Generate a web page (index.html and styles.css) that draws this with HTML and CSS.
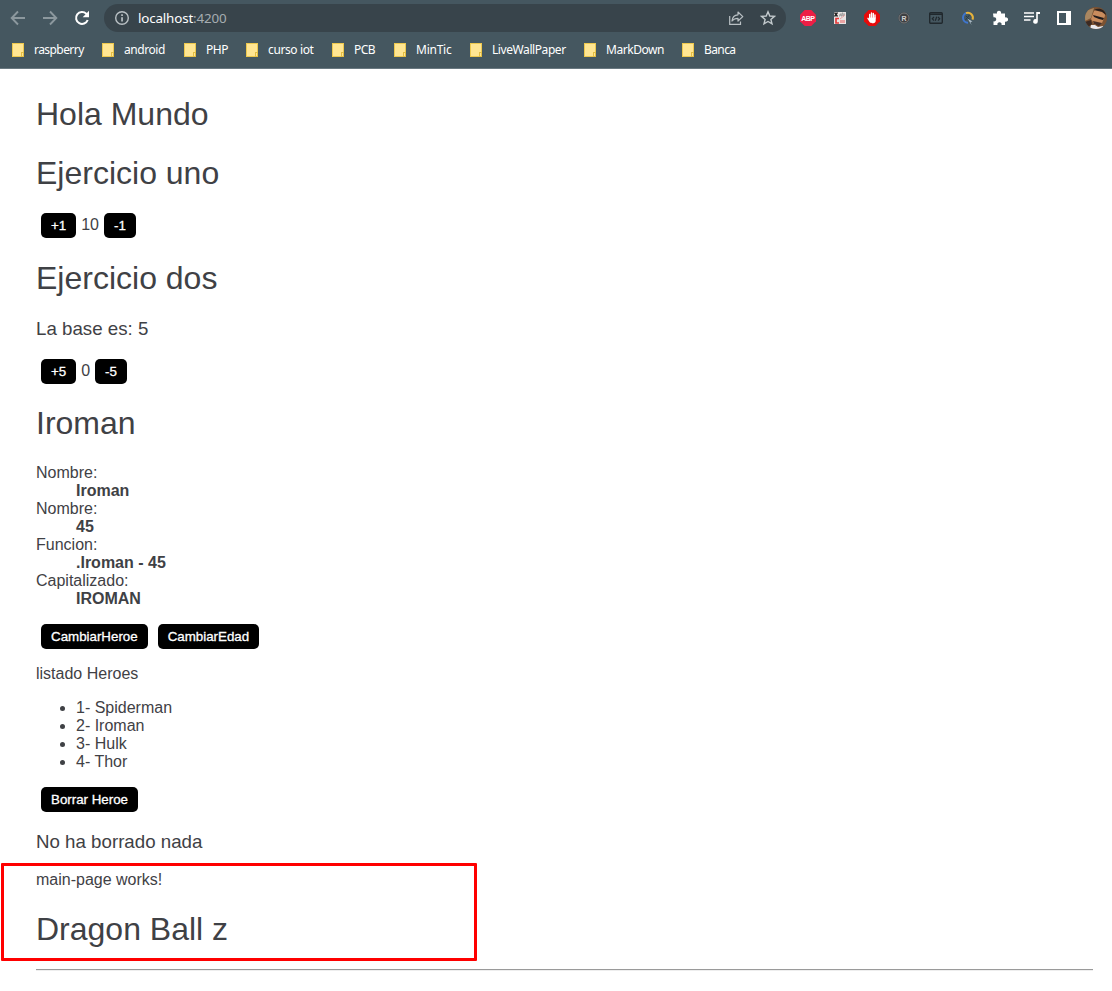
FILE: index.html
```html
<!DOCTYPE html>
<html lang="es">
<head>
<meta charset="utf-8">
<title>localhost:4200</title>
<link rel="stylesheet" href="styles.css">
</head>
<body>
<header class="browser">
  <div class="toolbar">
    <svg class="nav" viewBox="0 0 16 16"><path d="M15 8H2M8 1.5 1.7 8 8 14.500" fill="none" stroke="#8c989e" stroke-width="1.9"/></svg>
    <svg class="nav" viewBox="0 0 16 16"><path d="M1 8h13M8 1.500 14.300 8 8 14.500" fill="none" stroke="#8c989e" stroke-width="1.9"/></svg>
    <svg class="nav" viewBox="0 0 16 16"><path d="M13.700 10A6 6 0 1 1 12.300 3.700L14 5.400" fill="none" stroke="#fff" stroke-width="2"/><path d="M15 .8v6.400H8.700z" fill="#fff"/></svg>
    <div class="address">
      <svg class="info" viewBox="0 0 16 16"><circle cx="8" cy="8" r="6.300" fill="none" stroke="#b9c0c4" stroke-width="1.400"/><path d="M7.200 7.200h1.700v4.200H7.200zM7.200 4.300h1.700v1.700H7.200z" fill="#b9c0c4"/></svg>
      <span class="url">localhost<span class="port">:4200</span></span>
      <svg class="share" viewBox="0 0 16 16"><path d="M1.700 6v8.300h10.800V11.500" fill="none" stroke="#b9c0c4" stroke-width="1.200"/><path d="M4 11c.4-4 2.500-6 6-6.200V2l4.800 4.600L10 11V8.300C7.500 8.300 5.500 9 4 11z" fill="none" stroke="#b9c0c4" stroke-width="1.200" stroke-linejoin="round"/></svg>
      <svg class="star" viewBox="0 0 16 16"><path d="M8 1.800 9.800 6l4.600.4-3.500 3 1.100 4.500L8 11.500l-4 2.400 1.100-4.500-3.500-3L6.200 6z" fill="none" stroke="#c3cacd" stroke-width="1.400"/></svg>
    </div>
    <div class="extensions">
      <svg viewBox="0 0 16 16"><path d="M4.700 0h6.600L16 4.700v6.600L11.300 16H4.700L0 11.300V4.700z" fill="#ed1e45"/><text x="1.200" y="10.800" class="abp" textLength="13.600">ABP</text></svg>
      <svg viewBox="0 0 16 16"><path d="M2 2h12v12H2z" fill="#e8e4e4"/><path d="m2.500 2.500 3 4m0-4-3 4" stroke="#222" stroke-width="1.300"/><path d="M7 6h1V4h1v2h1V3h1v3h1V4h1" fill="none" stroke="#888" stroke-width=".7"/><path d="M7 8.500H4v4.500h3" fill="none" stroke="#e33b3b" stroke-width="1.700"/><path d="M8 10h5v3H8z" fill="#e9a2a2"/><path d="m8 9 5-4" stroke="#e9a2a2"/></svg>
      <svg viewBox="0 0 16 16"><path d="M4.700 0h6.600L16 4.700v6.600L11.300 16H4.700L0 11.300V4.700z" fill="#e60b0b"/><path d="M5.700 8V4.500M7.500 7.500V3M9.300 7.500v-4M11 8V5M6.500 12 4 8.300" stroke="#fff" stroke-width="1.400" stroke-linecap="round"/><path d="M5 7.500h6.700V11c0 1-1 2.300-2.500 2.300S6.500 13 5 10z" fill="#fff"/></svg>
      <svg viewBox="0 0 16 16"><circle cx="8" cy="8" r="5.700" fill="#3d3f41"/><circle cx="8" cy="8" r="5" fill="none" stroke="#77797b"/><text x="5.500" y="10.800" class="badge">R</text></svg>
      <svg viewBox="0 0 16 16"><rect x="1.700" y="2.700" width="12.600" height="10.600" rx="1" fill="none" stroke="#20282d" stroke-width="1.400"/><path d="M2 4.300h12" stroke="#20282d" stroke-width="1.400"/><path d="M6 7 4.300 8.800 6 10.500M10 7l1.700 1.800L10 10.500M8.700 6.700l-1.400 4" fill="none" stroke="#20282d" stroke-width="1.200"/></svg>
      <svg viewBox="0 0 16 16"><path d="M8 2.700A5 5 0 0 0 8 12.700" fill="none" stroke="#3e76cf" stroke-width="2"/><path d="M6 3.100a5 5 0 0 1 6.500 6.500" fill="none" stroke="#e7b33b" stroke-width="2"/><path d="m5.500 10 4-5M6 6l4 4" stroke="#263c4a"/><path d="m7.500 8.500 5 3-2 .5 1 3z" fill="#aebdc8"/></svg>
      <svg viewBox="0 0 16 16"><path d="M1 3.500h4A2.100 2.100 0 1 1 9 3.500h4v4a2.200 2.200 0 1 1 0 4V15H9.500a2.100 2.100 0 1 0-4 0H1.500v-3.700a2.100 2.100 0 1 0 0-4z" fill="#fff"/></svg>
      <svg viewBox="0 0 16 16"><path d="M0 3h10M0 6.500h10M0 10h6.500" stroke="#fff" stroke-width="1.700"/><path d="M12.200 2H16v2h-2.200v7.500a2.300 2.300 0 1 1-1.600-2.200z" fill="#fff"/></svg>
      <svg viewBox="0 0 16 16"><path fill="#fff" fill-rule="evenodd" d="M1 1h14v14H1zM3 3v10h7V3z"/></svg>
    </div>
    <svg class="avatar" viewBox="0 0 22 22"><defs><clipPath id="face"><circle cx="11" cy="11" r="11"/></clipPath></defs><g clip-path="url(#face)"><path d="M0 0h22v22H0z" fill="#7b5232"/><path d="M0 4 9 1 6 11 0 14z" fill="#a98761"/><path d="M9 4c5-4 11 0 11 5l-3 7-7 2-4-6z" fill="#c98c5d"/><path d="M9 3c5-3 12 0 12 5l-4-3z" fill="#2c211d"/><path d="m8 8 11 3-1 2-4-1-5-2z" fill="#211b1b"/><path d="m8 14 9 2-3 3-5-2z" fill="#46302a"/><path d="m5 22 1-4 4 0 3 2 5-1 1 3z" fill="#eaeaf0"/><path d="M0 15l6-2 1 4-4 3z" fill="#3b2a23"/></g></svg>
  </div>
  <nav class="bookmarks">
    <a class="mark w90"><i class="folder"></i><span class="raspberry">raspberry</span></a>
    <a class="mark w82"><i class="folder"></i><span class="android">android</span></a>
    <a class="mark w62"><i class="folder"></i><span class="php">PHP</span></a>
    <a class="mark w86"><i class="folder"></i><span class="curso">curso iot</span></a>
    <a class="mark w62"><i class="folder"></i><span class="pcb">PCB</span></a>
    <a class="mark w76"><i class="folder"></i><span class="mintic">MinTic</span></a>
    <a class="mark w114"><i class="folder"></i><span class="live">LiveWallPaper</span></a>
    <a class="mark w98"><i class="folder"></i><span class="markdown">MarkDown</span></a>
    <a class="mark"><i class="folder"></i><span class="banca">Banca</span></a>
  </nav>
</header>
<main class="page">
  <h1>Hola Mundo</h1>
  <h1>Ejercicio uno</h1>
  <div class="actions"><button>+1</button><span>10</span><button>-1</button></div>
  <h1>Ejercicio dos</h1>
  <h3 class="base">La base es: 5</h3>
  <div class="actions"><button>+5</button><span>0</span><button>-5</button></div>
  <h1>Iroman</h1>
  <dl>
    <dt>Nombre:</dt><dd>Iroman</dd>
    <dt>Nombre:</dt><dd>45</dd>
    <dt>Funcion:</dt><dd>.Iroman - 45</dd>
    <dt>Capitalizado:</dt><dd>IROMAN</dd>
  </dl>
  <div class="actions hero-actions"><button>CambiarHeroe</button><button>CambiarEdad</button></div>
  <p class="list-title">listado Heroes</p>
  <ul><li>1- Spiderman</li><li>2- Iroman</li><li>3- Hulk</li><li>4- Thor</li></ul>
  <div class="actions delete-action"><button>Borrar Heroe</button></div>
  <h3 class="status">No ha borrado nada</h3>
  <p class="works">main-page works!</p>
  <h1 class="dragon">Dragon Ball z</h1>
  <hr>
</main>
<div class="highlight"></div>
</body>
</html>
```
FILE: styles.css
```css
*, *::after { box-sizing: border-box; }
body {
  margin: 0;
  height: 991px;
  position: relative;
  overflow: hidden;
  background: #fff;
  color: #3f4145;
  font: 16px/18px "Liberation Sans", Arial, sans-serif;
}
svg { display: block; flex: none; }
.browser {
  height: 69px;
  background: #455760;
  border-bottom: 1px solid #697880;
  font-family: "Noto Sans", sans-serif;
}
.toolbar { display: flex; align-items: center; height: 36px; padding-left: 10px; }
.nav { width: 16px; height: 16px; margin-right: 16px; }
.address {
  display: flex;
  align-items: center;
  width: 682px;
  height: 28px;
  margin-left: -2px;
  padding: 0 10px;
  border-radius: 14px;
  background: #38444b;
}
.info { width: 16px; height: 16px; margin-right: 8px; }
.url { flex: 1; color: #fff; font-size: 13.4px; letter-spacing: -0.17px; }
.port { color: #a6adb1; }
.share { width: 16px; height: 16px; margin-right: 16px; }
.star { width: 16px; height: 16px; }
.extensions { display: flex; gap: 16px; margin-left: 14px; }
.extensions svg { width: 16px; height: 16px; }
.abp { fill: #fff; font: bold 7px "Liberation Sans", sans-serif; }
.badge { fill: #d0d0d0; font: bold 7px "Liberation Sans", sans-serif; }
.avatar { width: 22px; height: 22px; margin-left: 13px; }
.bookmarks { display: flex; height: 28px; padding-left: 12px; align-items: center; }
.mark { display: flex; align-items: center; gap: 10px; color: #fff; font-size: 12px; white-space: nowrap; }
.w62 { width: 62px; }
.w76 { width: 76px; }
.w82 { width: 82px; }
.w86 { width: 86px; }
.w90 { width: 90px; }
.w98 { width: 98px; }
.w114 { width: 114px; }
.folder {
  position: relative;
  width: 12px;
  height: 14px;
  border: 1px solid #edc84e;
  background: #ffe592;
}
.folder::after {
  content: "";
  position: absolute;
  right: -1px;
  bottom: -1px;
  width: 3px;
  height: 5px;
  border: 1px solid #e4bd43;
  background: #ffe592;
}
.raspberry { letter-spacing: -0.56px; }
.android { letter-spacing: -0.44px; }
.php { letter-spacing: -0.4px; }
.curso { letter-spacing: -0.38px; }
.pcb { letter-spacing: -0.5px; }
.mintic { letter-spacing: -0.25px; }
.live { letter-spacing: -0.42px; }
.markdown { letter-spacing: -0.45px; }
.banca { letter-spacing: -0.6px; }
.page { padding: 27px 19px 0 36px; }
h1 { margin: 0 0 21px; font-size: 32px; line-height: 37px; font-weight: 400; }
h1:first-child { margin-bottom: 22px; }
h3 { margin: 0; font-size: 18.72px; line-height: 21px; font-weight: 400; }
.base { margin-bottom: 20px; }
.actions { display: flex; height: 25px; margin-bottom: 22px; }
.base + .actions { margin-bottom: 21px; }
.actions span { line-height: 24px; }
button {
  height: 25px;
  margin: 0 5px;
  padding: 5px 10px;
  border: 0;
  border-radius: 5px;
  background: #000;
  color: #fff;
  font: 13.333px/15px "Liberation Sans", Arial, sans-serif;
  -webkit-text-stroke: 0.3px #fff;
}
dl { margin: 22px 0 16px; }
dd { margin-left: 40px; font-weight: 700; }
.hero-actions { margin-bottom: 16px; }
p { margin: 0; }
.list-title { margin-bottom: 16px; }
ul { margin: 0 0 16px; padding-left: 40px; }
.delete-action { margin-bottom: 19px; }
.status { margin-bottom: 19px; }
.works { margin-bottom: 22px; }
hr { height: 2px; margin: 0; border: 0; border-top: 1px solid #9a9a9a; background: #eee; }
.highlight {
  position: absolute;
  left: 1px;
  top: 863px;
  width: 476px;
  height: 98px;
  border: 3px solid #f00;
  border-radius: 1px;
}
```
